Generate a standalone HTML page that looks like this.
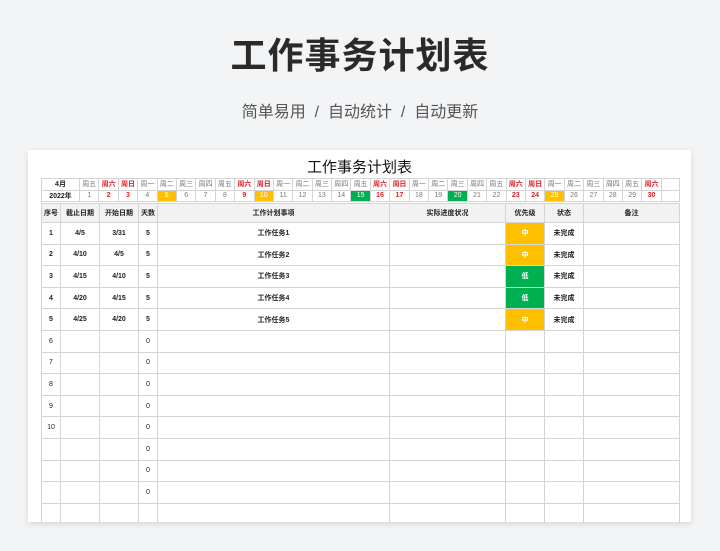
<!DOCTYPE html>
<html><head><meta charset="utf-8"><style>
*{margin:0;padding:0;box-sizing:border-box}
body{width:720px;height:551px;background:#f3f4f6;font-family:"Liberation Sans","Noto Sans CJK SC",sans-serif;position:relative;overflow:hidden}
.t{position:absolute;top:31px;left:0;width:720px;text-align:center;font-size:36px;line-height:50px;font-weight:bold;color:#2a2a2a;letter-spacing:1px}
.s{position:absolute;top:102px;left:0;width:720px;text-align:center;font-size:16px;line-height:22px;color:#555}
.card{position:absolute;left:28px;top:150px;width:663px;height:372px;background:#fff;box-shadow:0 2px 6px rgba(0,0,0,.12);overflow:hidden}
.ct{position:absolute;top:9px;left:0;width:663px;text-align:center;font-size:15px;line-height:18px;color:#111}
table{border-collapse:collapse;table-layout:fixed;position:absolute;left:13px}
td{border:1px solid #d4d4d4;text-align:center;font-size:7px;color:#333;overflow:hidden;white-space:nowrap;padding:0}
.cal{top:28px;width:638px}
.cal td{height:11.5px;color:#777}
.cal .r{color:#e0202a;font-weight:bold}
.cal .o{background:#ffc000;color:#fff}
.cal .g{background:#00b050;color:#fff}
.cal .m{color:#222;font-weight:bold}
.main{top:53px;width:638px}
.main td{height:21.6px;font-size:7px;color:#222}
.main tr:first-child td{background:#f2f2f2;height:19px;font-weight:bold}
.b td{font-weight:bold}
.po{background:#ffc000;color:#fff!important}
.pg{background:#00b050;color:#fff!important}
</style></head><body>
<div class="t">工作事务计划表</div>
<div class="s">简单易用 &nbsp;/&nbsp; 自动统计 &nbsp;/&nbsp; 自动更新</div>
<div class="card">
<div class="ct">工作事务计划表</div>
<table class="cal">
<colgroup><col style="width:38px"><col span="30" style="width:19.4px"><col style="width:18px"></colgroup>
<tr><td class="m">4月</td><td>周五</td><td class="r">周六</td><td class="r">周日</td><td>周一</td><td>周二</td><td>周三</td><td>周四</td><td>周五</td><td class="r">周六</td><td class="r">周日</td><td>周一</td><td>周二</td><td>周三</td><td>周四</td><td>周五</td><td class="r">周六</td><td class="r">周日</td><td>周一</td><td>周二</td><td>周三</td><td>周四</td><td>周五</td><td class="r">周六</td><td class="r">周日</td><td>周一</td><td>周二</td><td>周三</td><td>周四</td><td>周五</td><td class="r">周六</td><td></td></tr>
<tr><td class="m">2022年</td><td>1</td><td class="r">2</td><td class="r">3</td><td>4</td><td class="o">5</td><td>6</td><td>7</td><td>8</td><td class="r">9</td><td class="o">10</td><td>11</td><td>12</td><td>13</td><td>14</td><td class="g">15</td><td class="r">16</td><td class="r">17</td><td>18</td><td>19</td><td class="g">20</td><td>21</td><td>22</td><td class="r">23</td><td class="r">24</td><td class="o">25</td><td>26</td><td>27</td><td>28</td><td>29</td><td class="r">30</td><td></td></tr>
</table>
<table class="main">
<colgroup><col style="width:19px"><col style="width:39px"><col style="width:39px"><col style="width:19px"><col style="width:232px"><col style="width:116px"><col style="width:39px"><col style="width:39px"><col style="width:96px"></colgroup>
<tr><td>序号</td><td>截止日期</td><td>开始日期</td><td>天数</td><td>工作计划事项</td><td>实际进度状况</td><td>优先级</td><td>状态</td><td>备注</td></tr>
<tr class="b"><td>1</td><td>4/5</td><td>3/31</td><td>5</td><td>工作任务1</td><td></td><td class="po">中</td><td>未完成</td><td></td></tr>
<tr class="b"><td>2</td><td>4/10</td><td>4/5</td><td>5</td><td>工作任务2</td><td></td><td class="po">中</td><td>未完成</td><td></td></tr>
<tr class="b"><td>3</td><td>4/15</td><td>4/10</td><td>5</td><td>工作任务3</td><td></td><td class="pg">低</td><td>未完成</td><td></td></tr>
<tr class="b"><td>4</td><td>4/20</td><td>4/15</td><td>5</td><td>工作任务4</td><td></td><td class="pg">低</td><td>未完成</td><td></td></tr>
<tr class="b"><td>5</td><td>4/25</td><td>4/20</td><td>5</td><td>工作任务5</td><td></td><td class="po">中</td><td>未完成</td><td></td></tr>
<tr><td>6</td><td></td><td></td><td>0</td><td></td><td></td><td></td><td></td><td></td></tr>
<tr><td>7</td><td></td><td></td><td>0</td><td></td><td></td><td></td><td></td><td></td></tr>
<tr><td>8</td><td></td><td></td><td>0</td><td></td><td></td><td></td><td></td><td></td></tr>
<tr><td>9</td><td></td><td></td><td>0</td><td></td><td></td><td></td><td></td><td></td></tr>
<tr><td>10</td><td></td><td></td><td>0</td><td></td><td></td><td></td><td></td><td></td></tr>
<tr><td></td><td></td><td></td><td>0</td><td></td><td></td><td></td><td></td><td></td></tr>
<tr><td></td><td></td><td></td><td>0</td><td></td><td></td><td></td><td></td><td></td></tr>
<tr><td></td><td></td><td></td><td>0</td><td></td><td></td><td></td><td></td><td></td></tr>
<tr><td></td><td></td><td></td><td></td><td></td><td></td><td></td><td></td><td></td></tr>
</table>
</div>
</body></html>
